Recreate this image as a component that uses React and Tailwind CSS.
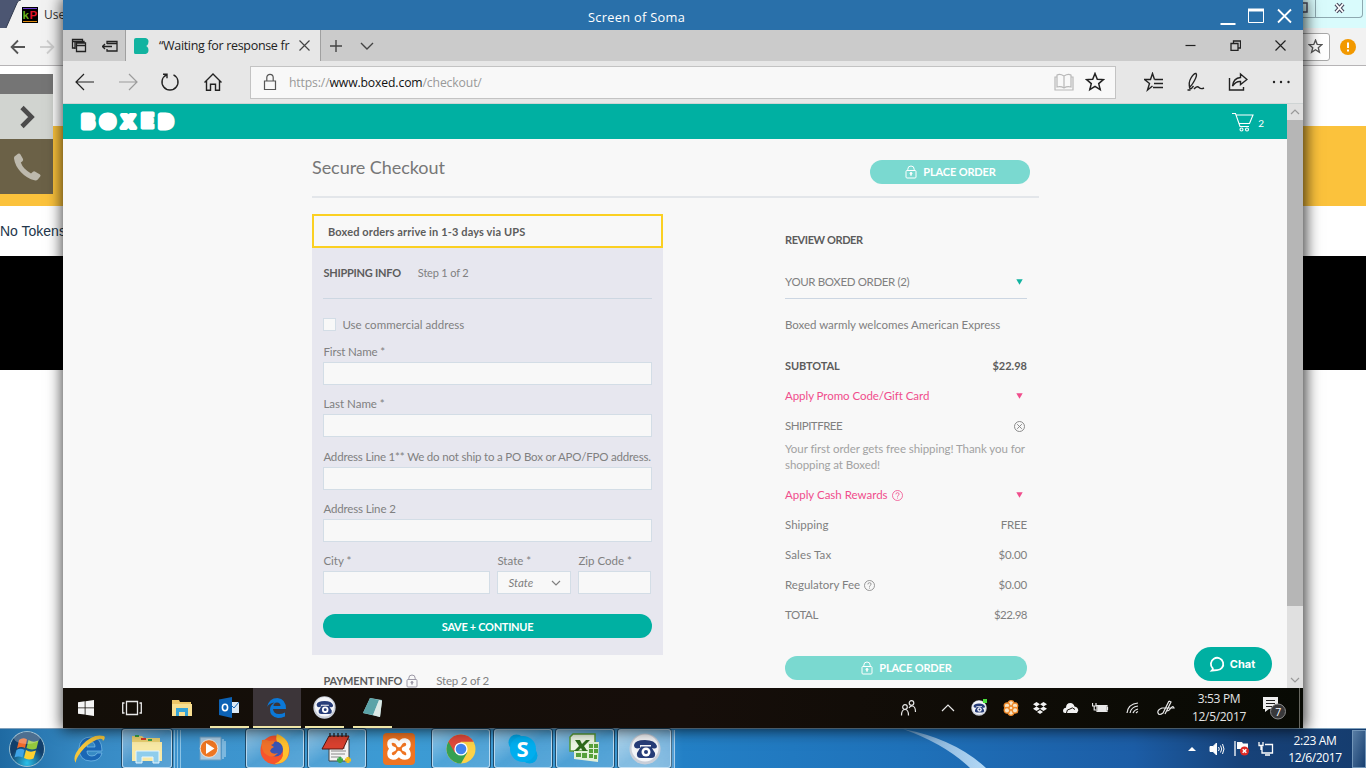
import React from "react";

const ui = "font-['Open_Sans','Noto_Sans',sans-serif]";

function Ico({ w = 20, h = 20, vb, sw = 1.2, className = "", children }) {
  return (
    <svg
      width={w}
      height={h}
      viewBox={vb || `0 0 ${w} ${h}`}
      fill="none"
      stroke="currentColor"
      strokeWidth={sw}
      className={"shrink-0 " + className}
    >
      {children}
    </svg>
  );
}

const star = "M10 1.5l2.3 5.7 6.1.4-4.7 4 1.5 6L10 14.3l-5.2 3.3 1.5-6-4.7-4 6.1-.4z";

function Lock({ className = "" }) {
  return (
    <Ico w={12} h={14} sw={1} className={className}>
      <rect x="1" y="5.5" width="10" height="7.500" rx="1" />
      <path d="M2.8 5.5V4.2a3.2 3.2 0 016.4 0v1.3M6 8.5v2.5" />
      <circle cx="6" cy="8.4" r="1" fill="currentColor" />
    </Ico>
  );
}

function HostBrowser() {
  return (
    <div className="flex h-[728px] flex-col bg-white">
      <div className="flex h-7 justify-between bg-[#d9fbfc]">
        <div className="flex">
          <svg width="72" height="28" className="block">
            <rect width="20" height="28" fill="#4c5672" />
            <path d="M6 28L17 3Q18 0 21 0H72V28Z" fill="#f2f2f2" />
            <path d="M6 28L17 3Q18 0 21 0" stroke="#333c50" fill="none" />
            <rect x="22" y="7" width="16" height="16" fill="#000" />
            <rect x="23" y="8" width="14" height="1" fill="#6b3bd0" />
            <rect x="23" y="21" width="14" height="1" fill="#e08a10" />
            <text x="22.5" y="19" fontSize="11.5" fontWeight="bold" fontFamily="Liberation Sans" fill="#6cb41e">k</text>
            <text x="29.5" y="19" fontSize="11.5" fontWeight="bold" fontFamily="Liberation Sans" fill="#e01228">P</text>
            <text x="44" y="19" fontSize="12" fontFamily="Open Sans" fill="#333">Use</text>
          </svg>
        </div>
        <div className="flex h-[18px] w-[72px] overflow-hidden">
          <div className="flex h-[18px] w-[22px] items-center justify-end border-r border-b border-[#8ea9b0] pr-[7px] pb-[3px]">
            <Ico w={8} h={11} sw={1.5} className="text-[#4a4c60]"><rect x="-3" y="1" width="10" height="9" /></Ico>
          </div>
          <div className="flex h-[18px] w-[47px] items-center justify-center rounded-br-[4px] border-r border-b border-[#8ea9b0] pb-[1px] pl-[1px]">
            <Ico w={14} h={12} sw={4} className="text-[#4a4c60]">
              <path d="M3 2l7 8M10 2L3 10" />
              <path d="M3 2l7 8M10 2L3 10" stroke="#fff" strokeWidth="1.8" />
            </Ico>
          </div>
        </div>
      </div>
      <div className="flex h-[38px] items-center justify-between border-b border-[#b6b4b6] bg-[#f2f2f2] pl-[10px] pr-[10px]">
        <div className="flex gap-[13px]">
          <Ico w={16} h={16} sw={1.8} className="text-[#555]"><path d="M15 8H2M8 1.5L1.6 8 8 14.5" /></Ico>
          <Ico w={16} h={16} sw={1.8} className="text-[#cfcfcf]"><path d="M1 8h13M8 1.5L14.4 8 8 14.5" /></Ico>
        </div>
        <div className="flex items-center gap-[10px]">
          <div className="flex h-7 w-[37px] items-center justify-end rounded-[3px] border border-[#a8a8a8] bg-white pr-[6px]">
            <Ico w={15} h={15} vb="0 0 20 20" sw={1.8} className="text-[#555]"><path d={star} /></Ico>
          </div>
          <svg width="16" height="16"><circle cx="8" cy="8" r="8" fill="#f29900" /><path d="M8 3.5v5.5M8 10.5v2" stroke="#fff" strokeWidth="2" /></svg>
        </div>
      </div>
      <div className="h-[60px]" />
      <div className="h-20 bg-[#fbc23c]" />
      <div className="flex h-[50px] items-center font-['Liberation_Sans',sans-serif] text-[14px] text-[#23364a]">No Tokens</div>
      <div className="h-[114px] bg-black" />
    </div>
  );
}

function SideDock() {
  return (
    <div className="absolute top-[74px] left-0 flex w-[53px] flex-col">
      <div className="h-5 bg-[#757575]" />
      <div className="flex h-[45px] items-center justify-center bg-[#d1d4d0] pl-px text-[#4b4b4b]">
        <Ico w={18} h={24} sw={4.6}><path d="M4 2.500l9.500 9.500-9.500 9.500" /></Ico>
      </div>
      <div className="flex h-[55px] items-center justify-center bg-[#6b6147] text-[#bdb9ad]">
        <svg width="28" height="28" viewBox="0 0 28 28" fill="currentColor">
          <path d="M1.5 3.5L5 .8Q6.500 0 7.500 1.500L10 6Q10.500 7.300 9.500 8.200L7.800 9.600Q9 13 11.500 15.600T18 20.500L20 18.800Q21 18 22.300 18.700L27 21.500Q28 22.300 27.200 23.500L24.800 26.500Q23.500 27.700 21.500 27.300Q14 25.500 8 19.200T1 5.500Q1 4.200 1.500 3.500Z" />
        </svg>
      </div>
    </div>
  );
}

function TitleBar() {
  return (
    <div className="flex h-[30px] shrink-0 items-center bg-[#2970aa] text-white">
      <div className={"flex-1 pt-[5px] pr-[10px] text-center text-[12.8px] " + ui}>
        <span className="tracking-[0.3px]">Screen of Soma</span>
      </div>
      <div className="flex w-[83px] items-center gap-[12px] pt-[2px]">
        <Ico w={16} h={16} sw={2} className="mt-1"><path d="M.5 14h15" /></Ico>
        <Ico w={16} h={16} sw={1}><path d="M.5 1.500h15v13H.5z" /><path d="M0 2h16" strokeWidth="3" /></Ico>
        <Ico w={16} h={16} sw={1.8}><path d="M2 1.500l13 13M15 1.500l-13 13" /></Ico>
      </div>
    </div>
  );
}

function TabStrip() {
  return (
    <div className="flex h-[31px] shrink-0 bg-[#cbcbcb]">
      <div className="flex w-[63px] items-center gap-[15px] border-r border-[#a0a0a0] pl-2 text-[#222]">
        <Ico w={16} h={16} sw={1.300}><path d="M3.500 10H1.500V1.500h10v2M1.500 3.500h10M5.500 13.500V5h9v8.500zM5.500 7.500h9M4 11V3.500h9V5" /></Ico>
        <Ico w={16} h={16} sw={1.300}><path d="M5 6V3.500h10v9.500H5v-2M5 5.500h10M0 8.500h10M3 6L.500 8.500 3 11" /></Ico>
      </div>
      <div className={"flex w-[194px] items-center bg-[#e7e7e7] pl-2 text-[12.5px] text-[#222] " + ui}>
        <svg width="16" height="16" className="shrink-0">
          <path d="M2 0h9.500Q14.500.500 14.500 3.500 14.500 6 13 7.500L12 8l1 .5q1.500 1 1.500 3.500 0 3.500-3 4H1.500Q0 16 0 14.500V2Q0 0 2 0Z" fill="#12b3a0" />
        </svg>
        <span className="ml-[9px] w-[131px] pt-px whitespace-nowrap tracking-[-0.32px]">“Waiting for response fr</span>
        <Ico w={11} h={11} className="ml-[9px] text-[#444]"><path d="M.5.500l10 10M10.500.500l-10 10" /></Ico>
      </div>
      <div className="flex flex-1 items-center gap-[17px] border-l border-[#a0a0a0] pl-[8px] text-[#444]">
        <Ico w={14} h={14} sw={1.4}><path d="M7 1v12M1 7h12" /></Ico>
        <Ico w={14} h={14} sw={1.4}><path d="M1 4l6 6 6-6" /></Ico>
      </div>
      <div className="flex items-center gap-[34px] pr-[17px] text-[#222]">
        <Ico w={11} h={11}><path d="M.5 5.500h10" /></Ico>
        <Ico w={11} h={11} sw={1.300}><path d="M1 3.500h7v7H1zM3.500 3.500V1h7v7H8" /></Ico>
        <Ico w={11} h={11}><path d="M.5.500l10 10M10.500.500l-10 10" /></Ico>
      </div>
    </div>
  );
}

function AddressBar() {
  return (
    <div className="flex h-[43px] shrink-0 items-center border-b border-[#cfd4d4] bg-[#e7e7e7] text-[#222]">
      <div className="flex w-[187px] items-center gap-[22.500px] pl-[12px]">
        <Ico w={20} h={18}><path d="M19 9H1M9 1L1 9l8 8" /></Ico>
        <Ico w={20} h={18} className="text-[#9c9c9c]"><path d="M1 9h18M11 1l8 8-8 8" /></Ico>
        <Ico w={20} h={20} sw={1.4}><path d="M6.500 2.800A8 8 0 1013.500 2.800M3 2.200h4v4" /></Ico>
        <Ico w={20} h={20} sw={1.4}><path d="M1.500 10.500L10 2l8.500 8.500M3.500 9v9.300h4v-6h5v6h4V9" /></Ico>
      </div>
      <div className="flex h-[33px] w-[866px] items-center border border-[#c3c3c3] bg-[#f8f8f8]">
        <Ico w={14} h={18} className="ml-[12px] text-[#555]"><path d="M1.500 8h11v8.500h-11zM3.800 8V4.500a3.200 3.200 0 016.400 0V8" /></Ico>
        <div className={"ml-[12px] pt-[2px] text-[12.2px] tracking-[-0.13px] text-[#999] " + ui}>https://<span className="text-[#111]">www.boxed.com</span>/checkout/</div>
        <div className="ml-auto flex items-center gap-[11px] pr-[10px]">
          <Ico w={20} h={18} className="text-[#b8b8b8]"><path d="M10 3v12M10 3Q6 .5 3 2v12q4-1 7 1M10 3q4-2.500 7-1v12q-4-1-7 1M3 4H1v13h18V4h-2" /></Ico>
          <Ico w={20} h={20} sw={1.5}><path d={star} /></Ico>
        </div>
      </div>
      <div className="ml-[28px] flex items-center gap-[22px]">
        <Ico w={20} h={20} sw={1.4}><path d="M10.500 7.500L8.500 1.500l-2 6H.500l5 4-2 6.500 5-4M10.500 7.500h8.500M10 11.500h9M9 15.500h10" /></Ico>
        <Ico w={20} h={20} sw={1.4}><path d="M4 16q-2-5 1-10t5-4.500q1.500 1.500-1.500 7T3.500 15q0 2 2 1.500l2-2.500M1.500 18h3M8 17q3-3.500 5-1.500t5 .5" /></Ico>
        <Ico w={20} h={20} sw={1.4}><path d="M1.500 6v12h14v-3M12.500 2l6.500 5.500-6.500 5V9.500Q8 9 4.500 14 5.500 6 12.500 5.500z" /></Ico>
        <svg width="20" height="20" fill="#222" className="ml-[2px]"><circle cx="2" cy="10" r="1.200" /><circle cx="9" cy="10" r="1.200" /><circle cx="16.500" cy="10" r="1.200" /></svg>
      </div>
    </div>
  );
}

function SiteHeader() {
  return (
    <div className="flex h-[35px] shrink-0 items-center justify-between bg-[#00b0a2] pr-[23px] pl-[14px] text-white">
      <svg width="101" height="26" viewBox="0 0 101 26">
        <g fill="#fff" stroke="#fff" strokeWidth="5" strokeLinejoin="round" fontFamily="Inter" fontWeight="900" fontSize="17">
          <text x="5.500" y="19" textLength="11.300" lengthAdjust="spacingAndGlyphs">B</text>
          <text x="23.800" y="19" textLength="14" lengthAdjust="spacingAndGlyphs" strokeWidth="5.200">O</text>
          <text x="44" y="19" fontSize="18" textLength="14.500" lengthAdjust="spacingAndGlyphs" strokeWidth="4">X</text>
          <text x="64.200" y="19.300" fontSize="19.500" textLength="12.500" lengthAdjust="spacingAndGlyphs" strokeWidth="3">E</text>
          <text x="82.500" y="19" textLength="13" lengthAdjust="spacingAndGlyphs">D</text>
        </g>
      </svg>
      <div className="flex items-center gap-[4px]">
        <Ico w={22} h={20} sw={1.100}><path d="M0 1.500h3.500L8 14.500h9M4 3h17L17.500 11.500H7" /><circle cx="9.500" cy="17.500" r="1.500" /><circle cx="15" cy="17.500" r="1.500" /></Ico>
        <span className="pt-[3px] text-[10px]">2</span>
      </div>
    </div>
  );
}

function Field({ label, className = "", tight = "" }) {
  return (
    <div className={"flex h-[52.250px] flex-col " + className}>
      <label className={"h-[19px] text-[11.5px] leading-[18px] whitespace-nowrap " + tight}>{label}</label>
      <div className="h-[23px] border border-[#d3dde6] bg-[#f8f8f8]" />
    </div>
  );
}

function ShippingForm() {
  return (
    <div className="flex w-[351px] flex-col">
      <div className="h-[34px] border-2 border-[#fbd022] bg-[#f8f8f8] pl-[14px] text-[11px] leading-[32px] font-bold text-[#5c5c5c]">
        <span className="tracking-[0.14px]">Boxed orders arrive in 1-3 days via UPS</span>
      </div>
      <div className="flex h-[407px] flex-col bg-[#e7e7ef] px-[11.400px]">
        <div className="flex h-[51px] items-center gap-[17px] border-b border-[#cdd7e2] pt-px">
          <span className="text-[11px] font-bold tracking-[-0.24px] text-[#5c5c5c]">SHIPPING INFO</span>
          <span className="text-[11px] tracking-[-0.18px]">Step 1 of 2</span>
        </div>
        <div className="flex h-[44px] items-center gap-[6px] pt-[7px]">
          <div className="h-[13px] w-[13px] border border-[#d3dde6] bg-[#f8f8f8]" />
          <span className="text-[11.5px] tracking-[0.03px]">Use commercial address</span>
        </div>
        <Field label="First Name *" tight="tracking-[-0.12px]" />
        <Field label="Last Name *" />
        <Field label="Address Line 1** We do not ship to a PO Box or APO/FPO address." tight="tracking-[-0.18px]" />
        <Field label="Address Line 2" tight="tracking-[-0.14px]" />
        <div className="flex gap-[7px]">
          <Field label="City *" className="w-[167px]" />
          <div className="flex w-[74px] flex-col text-[11.5px]">
            <label className="h-[19px] leading-[18px]">State *</label>
            <div className="flex h-[23px] items-center justify-between border border-[#d3dde6] bg-[#f8f8f8] pr-[9px] pl-[10px] italic">
              State
              <Ico w={10} h={8}><path d="M1 2l4 4 4-4" /></Ico>
            </div>
          </div>
          <Field label="Zip Code *" className="w-[73px]" />
        </div>
        <div className="mt-[10px] flex h-6 items-center justify-center rounded-full bg-[#00b0a2] pt-px text-[11px] font-bold tracking-[-0.3px] text-white">SAVE + CONTINUE</div>
      </div>
      <div className="flex h-[50px] items-center pt-[2px] pl-[11.500px]">
        <span className="text-[11px] font-bold tracking-[-0.2px] text-[#5c5c5c]">PAYMENT INFO</span>
        <Lock className="ml-[4px] text-[#9c98a6]" />
        <span className="ml-[18px] text-[11.5px] tracking-[-0.2px]">Step 2 of 2</span>
      </div>
    </div>
  );
}

const Caret = ({ className = "" }) => (
  <svg width="7" height="6" className={"mr-1 " + className} fill="currentColor"><path d="M.3.300h6.400L3.500 5.700z" /></svg>
);
const Help = () => (
  <Ico w={11} h={11} sw={0.800} className="ml-[4px]"><circle cx="5.500" cy="5.500" r="5" /><path d="M3.900 4.400q0-1.700 1.600-1.700t1.600 1.400q0 .8-1 1.400-.6.400-.6 1.300M5.500 7.600v1" /></Ico>
);

function Line({ label, value, className = "", labelClass = "", children }) {
  return (
    <div className={"flex items-center justify-between " + className}>
      <span className={"flex items-center whitespace-nowrap " + labelClass}>{label}{children}</span>
      {value}
    </div>
  );
}

const Amount = ({ children }) => <span className="tracking-[-0.2px]">{children}</span>;

function OrderReview() {
  return (
    <div className="flex w-[242px] flex-col pt-[16px] text-[11.5px]">
      <div className="flex h-[20px] items-center pt-px text-[11px] font-bold tracking-[-0.4px] text-[#5c5c5c]">REVIEW ORDER</div>
      <Line className="mt-[16px] h-[33px] border-b border-[#ccd6e2]" labelClass="tracking-[-0.36px]" label="YOUR BOXED ORDER (2)" value={<Caret className="text-[#12b3a0]" />} />
      <div className="mt-[16px] h-5 leading-5 tracking-[-0.02px]">Boxed warmly welcomes American Express</div>
      <Line className="mt-[21px] h-5 text-[11px] font-bold text-[#5c5c5c]" labelClass="tracking-[-0.12px]" label="SUBTOTAL" value="$22.98" />
      <Line className="mt-[10px] h-5 text-[#f04d8c]" labelClass="tracking-[-0.06px]" label="Apply Promo Code/Gift Card" value={<Caret />} />
      <Line className="mt-[10px] h-5" labelClass="tracking-[-0.5px]" label="SHIPITFREE" value={<Ico w={11} h={11} sw={0.900} className="mr-[2px]"><circle cx="5.500" cy="5.500" r="5" /><path d="M3.200 3.200l4.600 4.600M7.800 3.200L3.200 7.800" /></Ico>} />
      <div className="mt-[5px] h-[32px] leading-[15.500px] tracking-[-0.07px] whitespace-nowrap text-[#a2a2a2]">Your first order gets free shipping! Thank you for<br />shopping at Boxed!</div>
      <Line className="mt-[12px] h-5 text-[#f04d8c]" label="Apply Cash Rewards" value={<Caret />}><Help /></Line>
      <Line className="mt-[10px] h-5" label="Shipping" value={<Amount>FREE</Amount>} />
      <Line className="mt-[10px] h-5" labelClass="tracking-[0.12px]" label="Sales Tax" value={<Amount>$0.00</Amount>} />
      <Line className="mt-[10px] h-5" label="Regulatory Fee" value={<Amount>$0.00</Amount>}><Help /></Line>
      <Line className="mt-[10px] h-5" labelClass="tracking-[-0.4px]" label="TOTAL" value={<span className="tracking-[-0.5px]">$22.98</span>} />
      <div className="mt-[31px] flex h-6 items-center justify-center gap-[6px] rounded-full bg-[#7ad9d0] pl-px text-[11px] font-bold tracking-[-0.15px] text-white"><Lock /><span>PLACE ORDER</span></div>
    </div>
  );
}

function Page() {
  return (
    <div className="flex h-[584px] shrink-0 overflow-hidden bg-[#f8f8f8] font-['Lato',sans-serif] text-[#808080]">
      <div className="relative flex w-[1224px] flex-col">
        <SiteHeader />
        <div className="flex flex-col pl-[249px]">
          <div className="flex h-[59px] w-[727px] items-center justify-between border-b-2 border-[#e3e6ea] pt-[10px] pr-[9px] pb-[1px]">
            <h1 className="pb-[9px] text-[18px] tracking-[-0.05px] text-[#777]">Secure Checkout</h1>
            <div className="flex h-6 w-[160px] items-center justify-center gap-[6px] rounded-full bg-[#7ad9d0] pl-px text-[11px] font-bold tracking-[-0.15px] text-white"><Lock /><span>PLACE ORDER</span></div>
          </div>
          <div className="mt-[16px] flex gap-[122px]">
            <ShippingForm />
            <OrderReview />
          </div>
        </div>
        <div className="absolute top-[543px] left-[1131px] flex h-[34px] w-[78px] items-center justify-center gap-[5px] rounded-full bg-[#00b0a2] pr-[2px] text-[12px] font-bold text-white">
          <Ico w={16} h={16} sw={1.800}><path d="M3 14.500q1-1 .8-2A6.200 6.200 0 118 14.200q-2 0-5 .3z" /></Ico>
          <span className="font-['Inter',sans-serif] text-[11px]">Chat</span>
        </div>
      </div>
      <div className="flex w-4 flex-col items-center justify-between bg-[#e0e0e0] text-[#999]">
        <div className="flex h-4 items-center"><Ico w={10} h={8}><path d="M1 6l4-4 4 4" /></Ico></div>
        <div className="mb-auto h-[486px] w-full bg-[#b6b6b6]" />
        <div className="flex h-4 items-center"><Ico w={10} h={8}><path d="M1 2l4 4 4-4" /></Ico></div>
      </div>
    </div>
  );
}

function PhoneBall({ s = 24 }) {
  return (
    <svg width={s} height={s} viewBox="0 0 32 32" className="shrink-0">
      <circle cx="16" cy="16" r="15.500" fill="#c9ced8" /><circle cx="16" cy="15" r="13.500" fill="#f4f5f8" />
      <path d="M5 12Q6 7 16 7t12 6q0 3-3 2.500l-3-.5v-3H11v3l-3 .5Q5 15 5 12z" fill="#263c78" />
      <path d="M12 13.500h10l4 6.500q1 5-4 5H12q-5 0-4-5z" fill="#263c78" />
      <circle cx="17" cy="19" r="4.500" fill="#fff" /><circle cx="17" cy="19" r="2" fill="#263c78" />
    </svg>
  );
}

function Slot({ on, active, children }) {
  return (
    <div className={"flex h-full w-[47.700px] items-center justify-center " + (active ? "bg-[#3c3539]" : "")}>
      <div className={"flex h-full items-center justify-center border-b-2 pt-px " + (active ? "w-full " : "w-[39px] ") + (on ? "border-[#efe6a8]" : "border-transparent")}>{children}</div>
    </div>
  );
}

function RemoteTaskbar() {
  return (
    <div className="flex h-10 shrink-0 items-center bg-linear-to-r from-[#130e08] via-[#160e0a] to-[#080a04] text-[#e8e8e8]">
      <div className="flex w-[142px] items-center gap-[28px] pl-[15px]">
        <svg width="16" height="16" fill="#f4f4f4"><path d="M0 2.200L6.700 1.300V7.500H0zM7.500 1.200L16 0v7.500H7.500zM0 8.300h6.700v6.300L0 13.700zM7.500 8.300H16V16l-8.500-1.200z" /></svg>
        <Ico w={20} h={16} sw={1.300}><path d="M4.500 1.500h11v13h-11zM2.500 3H.7v10h1.800M17.500 3h1.800v10h-1.800" /></Ico>
      </div>
      <div className="-ml-[47px] flex h-full">
        <Slot><svg width="22" height="18"><path d="M1 1h7l1 2h11v13H1z" fill="#edc668" /><path d="M1 5h20v12H1z" fill="#f8df91" /><path d="M5 9h12v8h-3v-4H8v4H5z" fill="#36a4d8" /></svg></Slot>
        <Slot on><svg width="21" height="21"><path d="M10 5h10v11H10z" fill="#dceaf6" /><path d="M11 7l4 4 5-6" stroke="#1668b8" fill="none" /><path d="M0 2.500L13 0v21L0 18z" fill="#0c62b5" /><ellipse cx="6" cy="10.500" rx="2.600" ry="3.200" stroke="#fff" strokeWidth="1.600" fill="none" /></svg></Slot>
        <Slot on active><svg width="20" height="20"><path d="M0 9Q2 0 10.500 0 19 1 19 11H6q.5 5 6 5 3 0 6-1.500v4Q14 20 11 20 3 19 3 11.500 3 7 7.500 4.500 2 5 0 9zM6.500 8h7q0-3.500-3.500-3.500T6.500 8z" fill="#0b78d7" /></svg></Slot>
        <Slot on><PhoneBall s={23} /></Slot>
        <Slot on><svg width="22" height="22"><path d="M8 1l12 2-2 17-17-4z" fill="#a9cfd0" /><path d="M8 1l9 2-6 15-10-2z" fill="#5ba3a8" /><path d="M17 3l3 1-2 16-7-2z" fill="#dce9e6" /></svg></Slot>
      </div>
      <div className="ml-auto flex items-center">
        <Ico w={18} h={18} className="mr-[23px]"><circle cx="5" cy="8" r="2.300" /><path d="M1.500 16.500q0-6 3.500-6t3.500 6" /><circle cx="11.500" cy="4" r="2.300" /><path d="M9 9q1-2 3-2 3.500 0 3.500 6" /></Ico>
        <Ico w={14} h={10} className="mr-[16px]"><path d="M1 8l6-6 6 6" /></Ico>
        <div className="relative mr-[16px]"><PhoneBall s={16} /><div className="absolute -top-px right-0 h-1 w-1 bg-[#4be03c]" /></div>
        <svg width="16" height="16" className="mr-[14px]" stroke="#f08a2a" strokeWidth="1.300" fill="#f6e3c4"><circle cx="8" cy="3.500" r="2.800" /><circle cx="8" cy="12.500" r="2.800" /><circle cx="4" cy="5.800" r="2.800" /><circle cx="12" cy="5.800" r="2.800" /><circle cx="4" cy="10.300" r="2.800" /><circle cx="12" cy="10.300" r="2.800" /><circle cx="8" cy="8" r="2" /></svg>
        <svg width="14" height="14" className="mr-[15px]" fill="#f2f2f2"><path d="M3.500 1L7 3.200 3.500 5.400 0 3.200zM10.500 1L14 3.200l-3.500 2.200L7 3.200zM3.500 5.600L7 7.800l-3.500 2.200L0 7.800zM10.500 5.600L14 7.800 10.500 10 7 7.800zM7 9l3 2-3 2-3-2z" /></svg>
        <svg width="17" height="12" className="mr-[13px]" fill="#f2f2f2"><path d="M1 9q0-3 3-3.300Q4 1 8.500 1q3 0 4 3.500 3.500.5 3.800 4L15 11H3Q1 11 1 9z" /><path d="M4.500 11q0-4 3.500-4 2.200-2.500 5 .5" stroke="#120e08" fill="none" /></svg>
        <Ico w={17} h={14} className="mr-[17px]"><path d="M5 4.500h10v6H5zM15.500 6v3M.5 2v3h3.500V2M2.200 5v4h2" /><path d="M6 5.500h8v4H6z" fill="currentColor" /></Ico>
        <Ico w={15} h={14} className="mr-[16px]"><path d="M1 12Q2 3 12 2M4 12q1-6 8-7M7 12q1-3 5-4M10 12q1-1 2-1.500" /></Ico>
        <Ico w={18} h={16} className="mr-[17px]"><path d="M12 1L6 13q-4 3-5 0t4-5h12q-1-3-3 0t-4 3M12 1l2 1-6 12" /></Ico>
        <div className={"mr-[16px] flex w-[54px] flex-col items-center text-[12px] leading-[18px] whitespace-nowrap tracking-[-0.32px] text-[#e4e4e4] " + ui}><span>3:53 PM</span><span>12/5/2017</span></div>
        <svg width="25" height="24" className="mr-[12px]"><path d="M1 1h15v12H7l-4 3v-3H1z" fill="#eee" /><path d="M4 4.500h9M4 7.500h9M4 10.500h6" stroke="#222" /><circle cx="16" cy="15.500" r="7.500" fill="#38383a" stroke="#8a8a8a" /><text x="13.200" y="19.500" fontSize="10.500" fill="#fff" fontFamily="Open Sans">7</text></svg>
        <div className="h-10 w-[4px] border-l border-[#66665f]" />
      </div>
    </div>
  );
}

function Task({ open, children, className = "" }) {
  return (
    <div className={"flex h-[39px] shrink-0 items-center justify-center rounded-[3px] " + (open ? "border border-[#cfe6f6]/80 bg-linear-to-br from-white/45 via-white/10 to-white/15 shadow-[0_0_0_1px_#1f4c6c] " : "") + className}>{children}</div>
  );
}

function HostTaskbar() {
  return (
    <div className="relative flex h-10 items-center border-t border-[#7fa0bb] bg-[linear-gradient(90deg,#1f6aa2_0%,#3689c3_6%,#3d92cc_12%,#3c9bd4_30%,#3b95d0_48%,#2380c6_50%,#1f72ba_66%,#1c5da6_83%,#174279_91%,#153c6e_100%)] font-['Open_Sans',sans-serif] text-white">
      <svg width="1366" height="39" className="absolute top-0 left-0">
        <defs><linearGradient id="streak"><stop offset="0" stopColor="#fff" stopOpacity=".3" /><stop offset="1" stopColor="#b9defa" stopOpacity=".95" /></linearGradient></defs>
        <path d="M903 0Q955 10 986 39H970Q945 15 903 0Z" fill="url(#streak)" />
      </svg>
      <svg width="38" height="38" className="ml-[8px] shrink-0">
        <defs><radialGradient id="orb" cy=".9"><stop stopColor="#2bc1ea" /><stop offset="1" stopColor="#123f6b" /></radialGradient></defs>
        <circle cx="19" cy="19" r="17.500" fill="url(#orb)" stroke="#9abfd0" />
        <path d="M11 10q4-3 8-.5L17 18q-4-2-8 .5z" fill="#ef6a2b" /><path d="M20.500 10q5 3 10 .500L28.500 18.500q-5 2-10-.5z" fill="#93c83d" /><path d="M8.500 20q4-2.500 8 0L14.500 27.500q-4-2-8 0z" fill="#3ea3e8" /><path d="M18 20q4 3 10 .500L25.500 28.500q-5 2-9.500-.5z" fill="#fcd030" />
        <ellipse cx="19" cy="8" rx="13" ry="6" fill="#fff" opacity=".25" />
      </svg>
      <Task className="ml-[18px] w-[52px]">
        <svg width="34" height="32"><path d="M6 15Q7 4 18 4t11 14H14q0 5 5 5 4 0 5-3h5q-2 8-11 8Q6 28 6 15zM14 14h8q0-5-4-5t-4 5z" fill="#1a67b5" stroke="#8ccdf4" strokeWidth=".6" /><path d="M3 30Q-2 24 9 12T31 3q2 2-1 5 0-4-7-1Q14 11 8 19T3 30z" fill="#f5c63c" /></svg>
      </Task>
      <Task open className="ml-[6px] w-[50px]">
        <svg width="32" height="30"><path d="M1 2h10l2 2h16v22H1z" fill="#ebd171" /><path d="M4 2h4M17 6h4" stroke="#38a048" strokeWidth="2" /><path d="M10 5h5" stroke="#d83a2a" strokeWidth="2" /><path d="M1 8h30v19H1z" fill="#f8e9a6" /><path d="M5 17h23v12h-6v-6H11v6H5z" fill="#8fcdec" stroke="#e5f6ff" /></svg>
      </Task>
      <div className="ml-[2px] flex h-[38px] w-[7px] shrink-0 border-x border-[#8cc4e6] pl-[2px]"><div className="w-px bg-[#8cc4e6]" /></div>
      <Task className="ml-[3px] w-[56px]">
        <svg width="28" height="26"><path d="M2 1h21v23H2z" fill="#a7c9e1" stroke="#6b9cc0" /><path d="M25 3v20M27 5v16" stroke="#bcdcf0" /><circle cx="11" cy="12.500" r="8.800" fill="#ee7623" stroke="#fff" strokeWidth=".7" /><path d="M8 7l8.500 5.500L8 18z" fill="#fff" /></svg>
      </Task>
      <Task open className="ml-[6px] w-[58px]">
        <svg width="32" height="32"><circle cx="16" cy="17" r="14.500" fill="#f7542c" /><path d="M18 1q13 5 12 17-1 13-15 13 10-3 9-13-2-6-5-8-3-4-1-9z" fill="#ffc12e" /><circle cx="16.500" cy="16" r="7.500" fill="#3a55b4" /><path d="M3 7q4-1 7 1 4-1 6 0-1 3-4 4l3 2q-3 1-4 4 2 4 8 2-5 6-11 2Q1 18 3 7z" fill="#f0712a" /></svg>
      </Task>
      <Task open className="ml-[4px] w-[58px]">
        <svg width="32" height="32"><path d="M8 6h20v22H8z" fill="#f4f4f4" stroke="#444" /><path d="M10 18h15M10 21h14M10 24h10M10 15h14" stroke="#888" /><path d="M8 3h20L22 16H1z" fill="#d9412f" stroke="#541610" /><path d="M9 0v4M13 0v4M17 0v4M21 0v4M25 0v4" stroke="#222" strokeWidth="1.300" /><path d="M19 24v6M16 27h6" stroke="#3ca84a" strokeWidth="3" /><path d="M27 24v6M24 27h6" stroke="#f0c020" strokeWidth="3" /></svg>
      </Task>
      <Task className="ml-[7px] w-[52px]">
        <svg width="32" height="32"><rect width="32" height="32" rx="4" fill="#ef7422" /><g fill="none" stroke="#fff" strokeWidth="4.500" strokeLinecap="round" strokeLinejoin="round"><path d="M16 12Q14 7.500 10 7.500T6.500 11.500 11 16Q6.500 17 6.500 20.500T10 24.500 16 20Q18 24.500 22 24.500T25.500 20.500 21 16Q25.500 15 25.500 11.500T22 7.500 16 12Z" /></g></svg>
      </Task>
      <Task open className="ml-[7px] w-[58px]">
        <svg width="30" height="30" viewBox="0 0 30 30"><circle cx="15" cy="15" r="14.500" fill="#fdd247" /><path d="M15 15L2.400 7.800A14.500 14.500 0 0015 29.500l6.300-11z" fill="#36a052" /><path d="M2.400 7.800A14.500 14.500 0 0127.600 7.800H15L8.700 18.600z" fill="#e14a3c" /><circle cx="15" cy="15" r="6.600" fill="#fff" /><circle cx="15" cy="15" r="5.300" fill="#4384ef" /></svg>
      </Task>
      <Task open className="ml-[4px] w-[58px]">
        <svg width="30" height="30"><circle cx="8.500" cy="8.500" r="8" fill="#00a6e6" /><circle cx="21.500" cy="21.500" r="8" fill="#00a6e6" /><circle cx="15" cy="15" r="13" fill="#00aeef" /><text x="8.500" y="22.500" fontSize="22" fontWeight="bold" fontFamily="Open Sans" fill="#fff">S</text></svg>
      </Task>
      <Task open className="ml-[4px] w-[58px]">
        <svg width="32" height="31"><path d="M4 1h22v17H1V4z" fill="#edf6e4" stroke="#5a9c38" strokeWidth="1.500" /><path d="M6 7h5l2 4 4-4h4l-6 6 4 6h-5l-2-4-4 4H4l6-6z" fill="#2f6b1c" /><path d="M19 9h11l-1 20-24-3v-8h14z" fill="#e2f0d8" /><path d="M20 11h4v4h-4zM25 11h4v4h-4zM20 16h4v4h-4zM25 16h4v4h-4zM20 21h4v4h-4zM25 22h3v4h-3zM13 20h5v5h-5zM7 20h5v4H7z" fill="#57a03b" /></svg>
      </Task>
      <Task open className="ml-[4px] w-[53px] bg-white/30"><PhoneBall s={32} /></Task>
      <div className="h-[38px] w-[4px] shrink-0 border-r border-[#a9cdea] bg-white/20" />
      <div className="ml-auto flex shrink-0 items-center">
        <svg width="8" height="4" fill="#fff"><path d="M0 4l4-4 4 4z" /></svg>
        <Ico w={16} h={14} className="ml-[13px]" sw={1}><path d="M1 4.500h3L7.500 1v12L4 9.500H1z" fill="#fff" /><path d="M9.500 5q1.500 2 0 4M11.500 3.500q2.500 3.500 0 7M13.500 2q3 5 0 10" /></Ico>
        <svg width="16" height="15" className="ml-[9px]"><path d="M1 0v15" stroke="#fff" strokeWidth="1.300" /><path d="M3 1h5l1 1.500h5V8H3z" fill="#fff" /><circle cx="10.500" cy="10" r="4.500" fill="#de2a25" /><path d="M8.700 8.200l3.600 3.600M12.300 8.200l-3.600 3.600" stroke="#fff" strokeWidth="1.500" /></svg>
        <Ico w={16} h={15} className="ml-[8px]" sw={1.300}><path d="M4 5.500V12h10.500V3.500H7M7 14h5M1 1v3.500h4V1M3 5v4" /></Ico>
        <div className="ml-[13px] flex w-[56px] flex-col items-center text-[12px] leading-[17px] whitespace-nowrap tracking-[-0.35px]"><span>2:23 AM</span><span>12/6/2017</span></div>
        <div className="ml-[9px] h-[38px] w-[14px] border border-[#7295b8] bg-linear-to-br from-[#587da4] to-[#173f70]" />
      </div>
    </div>
  );
}

export default function App() {
  return (
    <div className="relative flex h-[768px] w-[1366px] flex-col overflow-hidden bg-white">
      <HostBrowser />
      <SideDock />
      <HostTaskbar />
      <div className="absolute top-0 left-[63px] flex h-[728px] w-[1240px] flex-col shadow-[1px_0_14px_2px_rgba(0,0,0,0.75)]">
        <TitleBar />
        <TabStrip />
        <AddressBar />
        <Page />
        <RemoteTaskbar />
      </div>
    </div>
  );
}
